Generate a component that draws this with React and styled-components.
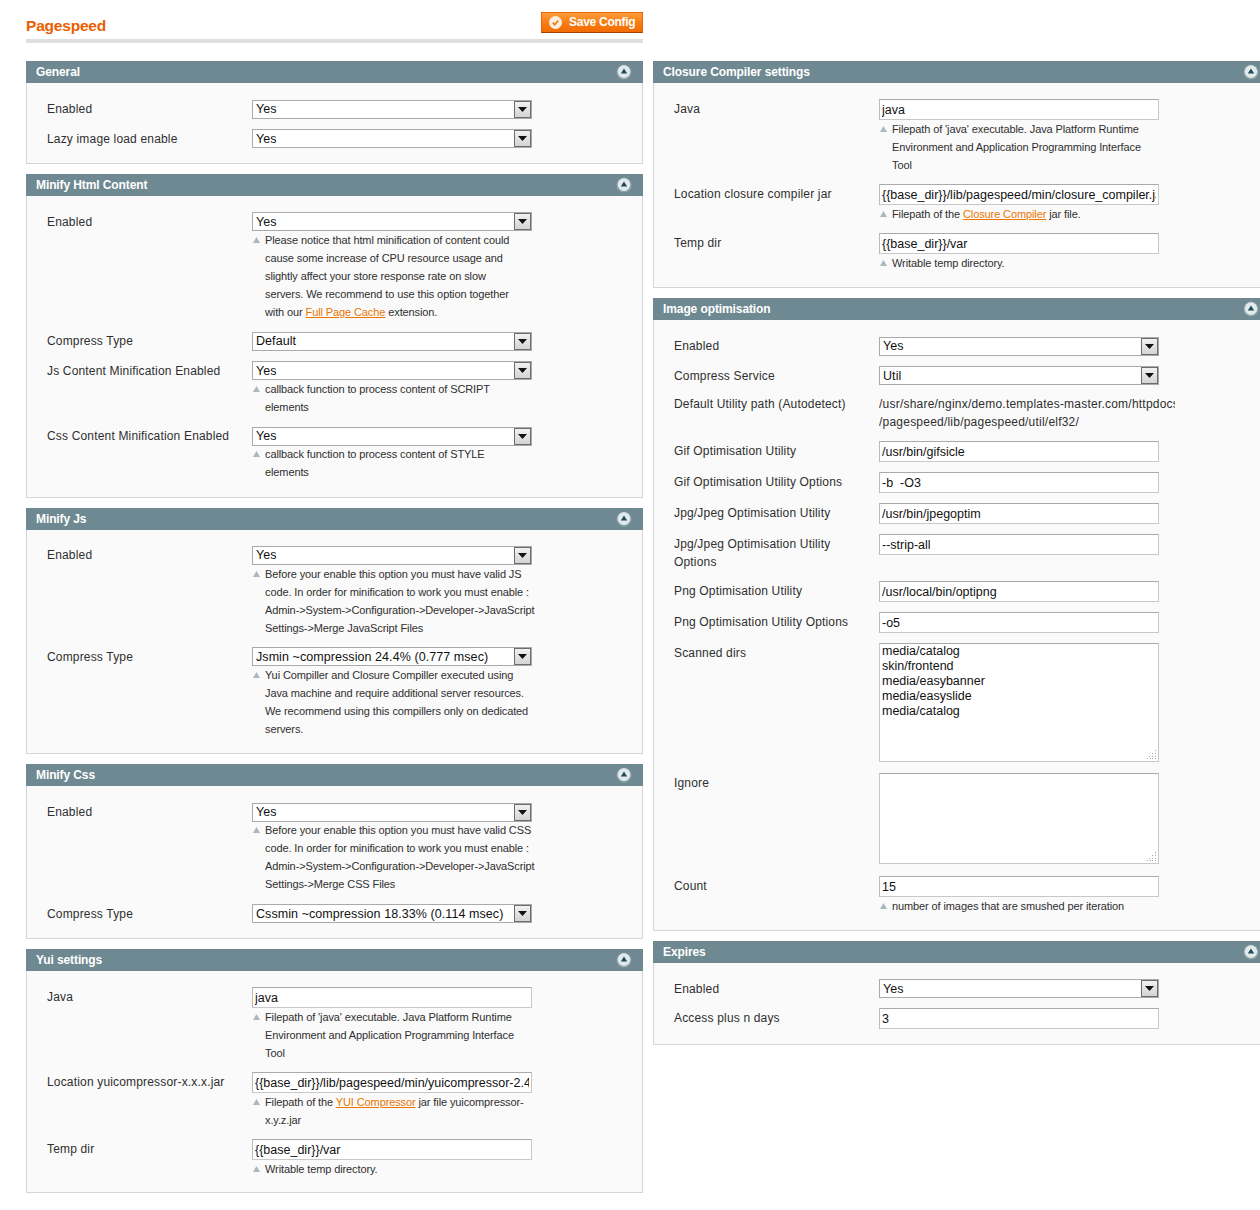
import React from "react";
import styled, { createGlobalStyle } from "styled-components";

const GlobalStyle = createGlobalStyle`
  html, body {
    margin: 0;
    padding: 0;
    background: #fff;
    overflow: hidden;
  }
  body {
    font-family: "Liberation Sans", Arial, sans-serif;
    font-size: 12px;
    color: #2f2f2f;
  }
`;

const NoteLink = styled.a`
  color: #ea7601;
  text-decoration: underline;
`;

const leftPanels = [
  {
    title: "General",
    top: 17,
    rows: [
      { label: "Enabled", select: "Yes" },
      { label: "Lazy image load enable", select: "Yes", drop: true },
    ],
  },
  {
    title: "Minify Html Content",
    top: 16,
    rows: [
      {
        label: "Enabled",
        select: "Yes",
        drop: true,
        gap: 11,
        note: [
          "Please notice that html minification of content could",
          "cause some increase of CPU resource usage and",
          "slightly affect your store response rate on slow",
          "servers. We recommend to use this option together",
          <>
            with our <NoteLink>Full Page Cache</NoteLink> extension.
          </>,
        ],
      },
      { label: "Compress Type", select: "Default" },
      {
        label: "Js Content Minification Enabled",
        select: "Yes",
        drop: true,
        gap: 11,
        note: ["callback function to process content of SCRIPT", "elements"],
      },
      {
        label: "Css Content Minification Enabled",
        select: "Yes",
        noteUp: true,
        gap: 11,
        note: ["callback function to process content of STYLE", "elements"],
      },
    ],
  },
  {
    title: "Minify Js",
    top: 16,
    rows: [
      {
        label: "Enabled",
        select: "Yes",
        note: [
          "Before your enable this option you must have valid JS",
          "code. In order for minification to work you must enable :",
          "Admin->System->Configuration->Developer->JavaScript",
          "Settings->Merge JavaScript Files",
        ],
      },
      {
        label: "Compress Type",
        select: "Jsmin ~compression 24.4% (0.777 msec)",
        drop: true,
        note: [
          "Yui Compiller and Closure Compiller executed using",
          "Java machine and require additional server resources.",
          "We recommend using this compillers only on dedicated",
          "servers.",
        ],
      },
    ],
  },
  {
    title: "Minify Css",
    top: 17,
    rows: [
      {
        label: "Enabled",
        select: "Yes",
        noteUp: true,
        gap: 11,
        note: [
          "Before your enable this option you must have valid CSS",
          "code. In order for minification to work you must enable :",
          "Admin->System->Configuration->Developer->JavaScript",
          "Settings->Merge CSS Files",
        ],
      },
      { label: "Compress Type", select: "Cssmin ~compression 18.33% (0.114 msec)", drop: true },
    ],
  },
  {
    title: "Yui settings",
    top: 16,
    rows: [
      {
        label: "Java",
        input: "java",
        note: [
          "Filepath of 'java' executable. Java Platform Runtime",
          "Environment and Application Programming Interface",
          "Tool",
        ],
      },
      {
        label: "Location yuicompressor-x.x.x.jar",
        input: "{{base_dir}}/lib/pagespeed/min/yuicompressor-2.4.7.jar",
        note: [
          <>
            Filepath of the <NoteLink>YUI Compressor</NoteLink> jar file yuicompressor-
          </>,
          "x.y.z.jar",
        ],
      },
      {
        label: "Temp dir",
        input: "{{base_dir}}/var",
        gap: 9,
        note: ["Writable temp directory."],
      },
    ],
  },
];

const rightPanels = [
  {
    title: "Closure Compiler settings",
    top: 16,
    rows: [
      {
        label: "Java",
        input: "java",
        note: [
          "Filepath of 'java' executable. Java Platform Runtime",
          "Environment and Application Programming Interface",
          "Tool",
        ],
      },
      {
        label: "Location closure compiler jar",
        input: "{{base_dir}}/lib/pagespeed/min/closure_compiler.jar",
        note: [
          <>
            Filepath of the <NoteLink>Closure Compiler</NoteLink> jar file.
          </>,
        ],
      },
      {
        label: "Temp dir",
        input: "{{base_dir}}/var",
        note: ["Writable temp directory."],
      },
    ],
  },
  {
    title: "Image optimisation",
    top: 17,
    rows: [
      { label: "Enabled", select: "Yes" },
      { label: "Compress Service", select: "Util", drop: true },
      {
        label: "Default Utility path (Autodetect)",
        gap: 10,
        text: [
          "/usr/share/nginx/demo.templates-master.com/httpdocs",
          "/pagespeed/lib/pagespeed/util/elf32/",
        ],
      },
      { label: "Gif Optimisation Utility", input: "/usr/bin/gifsicle" },
      { label: "Gif Optimisation Utility Options", input: "-b  -O3" },
      { label: "Jpg/Jpeg Optimisation Utility", input: "/usr/bin/jpegoptim" },
      {
        label: (
          <>
            Jpg/Jpeg Optimisation Utility
            <br />
            Options
          </>
        ),
        input: "--strip-all",
        gap: 10,
      },
      { label: "Png Optimisation Utility", input: "/usr/local/bin/optipng" },
      { label: "Png Optimisation Utility Options", input: "-o5" },
      {
        label: "Scanned dirs",
        area: "media/catalog\nskin/frontend\nmedia/easybanner\nmedia/easyslide\nmedia/catalog",
        areaHeight: 119,
        gap: 11,
      },
      { label: "Ignore", area: "", areaHeight: 91, gap: 12 },
      {
        label: "Count",
        input: "15",
        note: ["number of images that are smushed per iteration"],
      },
    ],
  },
  {
    title: "Expires",
    top: 16,
    rows: [
      { label: "Enabled", select: "Yes", drop: true },
      { label: "Access plus n days", input: "3" },
    ],
  },
];

const Note = ({ lines, up }) => (
  <NoteBlock $up={up}>
    <NoteMark viewBox="0 0 7 6">
      <path d="M3.5 0 L7 6 L0 6 Z" fill="#a9b8bf" />
    </NoteMark>
    {lines.map((line, i) => (
      <NoteLine key={i}>{line}</NoteLine>
    ))}
  </NoteBlock>
);

const Select = ({ value, drop }) => (
  <SelectBox>
    <SelectValue $drop={drop}>{value}</SelectValue>
    <SelectArrow>
      <svg width="9" height="5" viewBox="0 0 9 5">
        <path d="M0 0 H9 L4.5 5 Z" fill="#111" />
      </svg>
    </SelectArrow>
  </SelectBox>
);

const Area = ({ value, height }) => (
  <AreaWrap>
    <TextArea $height={height} defaultValue={value} readOnly />
    <Grip viewBox="0 0 9 9">
      <path
        d="M8 0h1v1H8zM5 3h1v1H5zM8 3h1v1H8zM2 6h1v1H2zM5 6h1v1H5zM8 6h1v1H8zM0 8h1v1H0zM3 8h1v1H3zM5 8h1v1H5zM8 8h1v1H8z"
        fill="#a8a8a8"
      />
    </Grip>
  </AreaWrap>
);

const Row = ({ row }) => {
  const isArea = row.area !== undefined;
  const gap = row.gap ?? 10;
  return (
    <FormRow $gap={gap}>
      <Label $drop={row.drop || !!row.input || isArea}>{row.label}</Label>
      <Value>
        {row.select && <Select value={row.select} drop={row.drop} />}
        {row.input && <TextInput defaultValue={row.input} readOnly />}
        {row.text && row.text.map((t, i) => <PlainValue key={i}>{t}</PlainValue>)}
        {isArea && <Area value={row.area} height={row.areaHeight} />}
        {row.note && <Note lines={row.note} up={row.noteUp} />}
      </Value>
    </FormRow>
  );
};

const Panel = ({ panel }) => (
  <section>
    <PanelHead>
      {panel.title}
      <CollapseIcon viewBox="0 0 16 16">
        <circle cx="8" cy="8" r="7.6" fill="#8ea4ac" />
        <circle cx="8" cy="7.6" r="6.3" fill="#e3eaec" />
        <path d="M8 4.4 L11.2 9.6 H4.8 Z" fill="#1f4a5c" />
      </CollapseIcon>
    </PanelHead>
    <PanelBody $top={panel.top}>
      {panel.rows.map((row, i) => (
        <Row key={i} row={row} />
      ))}
    </PanelBody>
  </section>
);

export default function App() {
  return (
    <Page>
      <GlobalStyle />
      <Column>
        <PageHead>
          <PageTitle>Pagespeed</PageTitle>
          <SaveButton>
            <svg width="13" height="13" viewBox="0 0 13 13">
              <circle cx="6.5" cy="6.5" r="6.5" fill="#fdeee0" />
              <path d="M3.8 6.6 L5.8 8.8 L9.2 4.4" fill="none" stroke="#f07a14" strokeWidth="1.7" />
            </svg>
            Save Config
          </SaveButton>
        </PageHead>
        <Panels>
          {leftPanels.map((p) => (
            <Panel key={p.title} panel={p} />
          ))}
        </Panels>
      </Column>
      <RightColumn>
        <Panels>
          {rightPanels.map((p) => (
            <Panel key={p.title} panel={p} />
          ))}
        </Panels>
      </RightColumn>
    </Page>
  );
}

const Page = styled.div`
  display: flex;
  gap: 10px;
  width: 1260px;
  height: 1210px;
  padding-left: 26px;
  box-sizing: border-box;
  overflow: hidden;
`;

const Column = styled.div`
  flex: 0 0 617px;
  width: 617px;
`;

const RightColumn = styled(Column)`
  padding-top: 61px;
`;

const PageHead = styled.div`
  display: flex;
  justify-content: space-between;
  align-items: flex-start;
  height: 43px;
  padding-top: 12px;
  box-sizing: border-box;
  margin-bottom: 18px;
  border-bottom: 4px solid #dfdfdf;
`;

const PageTitle = styled.h3`
  margin: 5px 0 0;
  font-size: 15.5px;
  line-height: 18px;
  letter-spacing: -0.2px;
  font-weight: 700;
  color: #eb5e00;
`;

const SaveButton = styled.button`
  display: flex;
  align-items: center;
  gap: 7px;
  width: 102px;
  height: 21px;
  padding: 0 0 1px 7px;
  box-sizing: border-box;
  border: 1px solid #ed6502;
  border-bottom-color: #a04300;
  background: linear-gradient(#fc9c3c, #f67b10 55%, #f36c04);
  color: #fff;
  font-family: "Liberation Sans", Arial, sans-serif;
  font-size: 12px;
  letter-spacing: -0.27px;
  font-weight: 700;
  white-space: nowrap;
`;

const Panels = styled.div`
  display: flex;
  flex-direction: column;
  gap: 10px;
`;

const PanelHead = styled.div`
  position: relative;
  height: 22px;
  padding-left: 10px;
  background: #6f8992;
  color: #fff;
  font-size: 12px;
  letter-spacing: -0.1px;
  font-weight: 700;
  line-height: 22px;
`;

const CollapseIcon = styled.svg`
  position: absolute;
  top: 3px;
  right: 11px;
  width: 16px;
  height: 16px;
`;

const PanelBody = styled.div`
  padding: ${(p) => p.$top}px 0 5px 20px;
  background: #fafafa;
  border: 1px solid #d6d6d6;
  border-top: 0;
`;

const FormRow = styled.div`
  display: grid;
  grid-template-columns: 205px 280px;
  padding-bottom: ${(p) => p.$gap}px;
`;

const Label = styled.div`
  padding-top: ${(p) => (p.$drop ? 1 : 0)}px;
  line-height: 18px;
  letter-spacing: 0.17px;
  color: #2f2f2f;
`;

const Value = styled.div`
  min-width: 0;
`;

const SelectBox = styled.div`
  display: flex;
  height: 19px;
  box-sizing: border-box;
  background: #fff;
  border: 1px solid #aaa;
`;

const SelectValue = styled.div`
  flex: 1;
  padding: ${(p) => (p.$drop ? 1 : 0)}px 0 0 3px;
  font-size: 12.5px;
  letter-spacing: 0.07px;
  line-height: 16px;
  color: #111;
  white-space: nowrap;
  overflow: hidden;
`;

const SelectArrow = styled.div`
  flex: 0 0 17px;
  display: flex;
  align-items: center;
  justify-content: center;
  box-sizing: border-box;
  border: 1px solid #6c6c6c;
  background: linear-gradient(#f1f1f1, #d4d4d4);
`;

const TextInput = styled.input`
  display: block;
  width: 280px;
  height: 21px;
  padding: 0 2px;
  box-sizing: border-box;
  border: 1px solid #c8c8c8;
  border-top-color: #aaa;
  border-left-color: #bbb;
  outline: 0;
  background: #fff;
  color: #111;
  font-family: "Liberation Sans", Arial, sans-serif;
  font-size: 12.5px;
`;

const PlainValue = styled.div`
  width: 296px;
  line-height: 18px;
  letter-spacing: 0.22px;
  white-space: nowrap;
  overflow: hidden;
`;

const AreaWrap = styled.div`
  position: relative;
`;

const TextArea = styled.textarea`
  display: block;
  width: 280px;
  height: ${(p) => p.$height}px;
  padding: 0 2px;
  box-sizing: border-box;
  border: 1px solid #c8c8c8;
  border-top-color: #aaa;
  outline: 0;
  resize: none;
  background: #fff;
  color: #111;
  font-family: "Liberation Sans", Arial, sans-serif;
  font-size: 12.5px;
  line-height: 15px;
`;

const Grip = styled.svg`
  position: absolute;
  right: 3px;
  bottom: 3px;
  width: 9px;
  height: 9px;
`;

const NoteBlock = styled.div`
  position: relative;
  margin-top: ${(p) => (p.$up ? -1 : 0)}px;
  padding-left: 13px;
  width: 290px;
`;

const NoteMark = styled.svg`
  position: absolute;
  left: 1px;
  top: 6px;
  width: 7px;
  height: 6px;
`;

const NoteLine = styled.div`
  font-size: 11px;
  letter-spacing: -0.11px;
  line-height: 18px;
  color: #2f2f2f;
  white-space: nowrap;
`;
